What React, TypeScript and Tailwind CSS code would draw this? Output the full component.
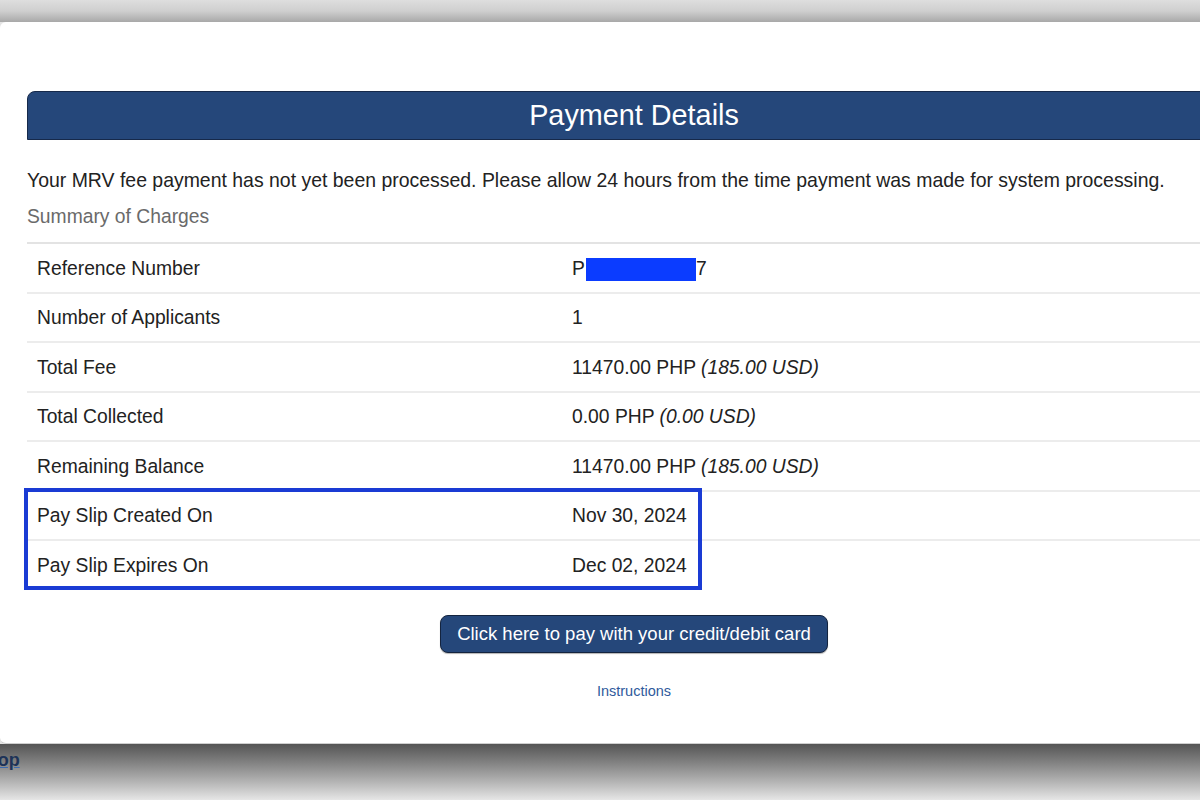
import React from "react";

const rows: { label: string; value: React.ReactNode }[] = [
  {
    label: "Reference Number",
    value: (
      <span className="flex items-center">
        P<span className="inline-block w-[110px] h-[23px] bg-[#0b3cff] ml-[1px]" />7
      </span>
    ),
  },
  { label: "Number of Applicants", value: "1" },
  {
    label: "Total Fee",
    value: (
      <>
        11470.00 PHP <em>(185.00 USD)</em>
      </>
    ),
  },
  {
    label: "Total Collected",
    value: (
      <>
        0.00 PHP <em>(0.00 USD)</em>
      </>
    ),
  },
  {
    label: "Remaining Balance",
    value: (
      <>
        11470.00 PHP <em>(185.00 USD)</em>
      </>
    ),
  },
  { label: "Pay Slip Created On", value: "Nov 30, 2024" },
  { label: "Pay Slip Expires On", value: "Dec 02, 2024" },
];

export default function App() {
  return (
    <div
      className="w-[1200px] h-[800px] overflow-hidden flex flex-col bg-[#e4e4e4]"
      style={{ fontFamily: '"Liberation Sans", Arial, Helvetica, sans-serif' }}
    >
      <div className="h-[22px] shrink-0 bg-gradient-to-b from-[#dedede] via-[#cfcfcf] to-[#a8a8a8]" />
      <div className="h-[722px] shrink-0 bg-white rounded-l-[6px] overflow-hidden border-b border-[#cfcfcf]">
        <div className="w-[1214px] ml-[27px] flex flex-col text-[#222]">
          <div className="mt-[69px] h-[49px] bg-[#25477a] border border-[#16294a] rounded-tl-[8px] flex items-center justify-center text-white text-[28.8px]">
            Payment Details
          </div>
          <p className="mt-[26px] text-[19.45px] leading-[28px]">
            Your MRV fee payment has not yet been processed. Please allow 24 hours from the time payment was made for system processing.
          </p>
          <p className="mt-[9px] text-[19.3px] leading-[28px] text-[#6a6a6a]">Summary of Charges</p>
          <div className="relative mt-[11px]">
            {rows.map((r, i) => (
              <div
                key={r.label}
                className={`flex items-center h-[49.5px] pt-[3px] text-[19.3px] ${i === 0 ? "border-t-2 border-[#e3e3e3]" : "border-t-2 border-[#ececec]"}`}
              >
                <div className="w-[535px] pl-[10px]">{r.label}</div>
                <div className="pl-[10px]">{r.value}</div>
              </div>
            ))}
            <div className="absolute left-[-3px] top-[246px] w-[678px] h-[102px] border-[4px] border-[#1a3bd4]" />
          </div>
          <div className="flex justify-center mt-[26px]">
            <button className="w-[388px] h-[38px] rounded-[8px] bg-[#25477a] border border-[#14243f] text-white text-[18.5px] shadow-[0_1px_1px_rgba(0,0,0,0.3)]">
              Click here to pay with your credit/debit card
            </button>
          </div>
          <div className="flex justify-center mt-[28px]">
            <span className="text-[14.5px] leading-[20px] text-[#2f5a9c]">Instructions</span>
          </div>
        </div>
      </div>
      <div className="flex-1 bg-gradient-to-b from-[#555555] via-[#9a9a9a] to-[#e6e6e6] pt-[4px]">
        <span className="block ml-[-12px] text-[18px] font-bold text-[#1d3358] underline decoration-[#3d6bb0] leading-[24px]">
          Top
        </span>
      </div>
    </div>
  );
}
